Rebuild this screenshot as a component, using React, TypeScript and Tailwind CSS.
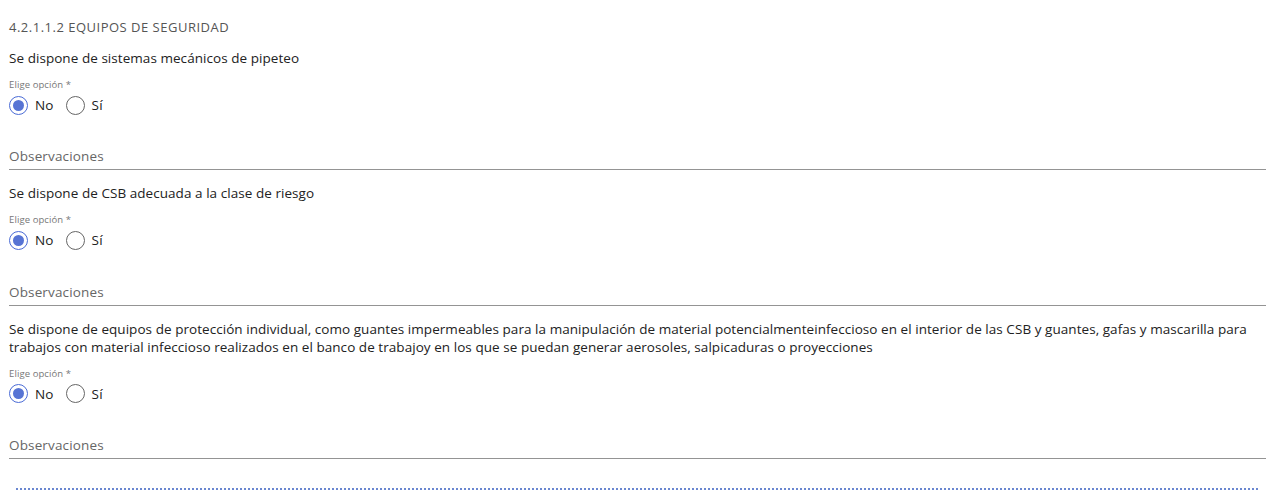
const FONT = "font-['Open_Sans',sans-serif]";

type Question = { id: string; text: string; value: "no" | "si" };

const QUESTIONS: Question[] = [
  { id: "q1", text: "Se dispone de sistemas mecánicos de pipeteo", value: "no" },
  { id: "q2", text: "Se dispone de CSB adecuada a la clase de riesgo", value: "no" },
  {
    id: "q3",
    text: "Se dispone de equipos de protección individual, como guantes impermeables para la manipulación de material potencialmenteinfeccioso en el interior de las CSB y guantes, gafas y mascarilla para trabajos con material infeccioso realizados en el banco de trabajoy en los que se puedan generar aerosoles, salpicaduras o proyecciones",
    value: "no",
  },
];

function Radio({ checked, label }: { checked: boolean; label: string }) {
  return (
    <label className="flex items-center gap-[7px]">
      <span
        className={`w-[19px] h-[19px] rounded-full border flex items-center justify-center ${
          checked ? "border-[#4a6bd6]" : "border-[#666]"
        }`}
      >
        {checked && <span className="w-[11px] h-[11px] rounded-full bg-[#5774d4]" />}
      </span>
      <span className="text-[13.5px] tracking-[0.15px] text-[#222]">{label}</span>
    </label>
  );
}

function QuestionBlock({ q }: { q: Question }) {
  return (
    <div className="flex flex-col">
      <p className="text-[13.5px] tracking-[0.05px] leading-[18px] text-[#222]">{q.text}</p>
      <p className="mt-[12px] text-[9.5px] tracking-[0.1px] leading-[12px] text-[#777]">Elige opción *</p>
      <div className="mt-[4px] flex items-center gap-[12px]">
        <Radio checked={q.value === "no"} label="No" />
        <Radio checked={q.value === "si"} label="Sí" />
      </div>
      <div className="mt-[32px] border-b border-[#949494] pb-[4px]">
        <p className="text-[13.5px] tracking-[0.15px] leading-[18px] text-[#666]">Observaciones</p>
      </div>
    </div>
  );
}

export default function App() {
  return (
    <div className={`w-[1266px] h-[498px] bg-white pl-[9px] pt-[18px] overflow-hidden ${FONT}`}>
      <h2 className="text-[13px] tracking-[0.5px] leading-[18px] font-medium text-[#555]">
        4.2.1.1.2 EQUIPOS DE SEGURIDAD
      </h2>
      <div className="mt-[13px] flex flex-col gap-[14px]">
        {QUESTIONS.map((q) => (
          <QuestionBlock key={q.id} q={q} />
        ))}
      </div>
      <div className="mt-[29px] ml-[7px] mr-[8px] border-b-2 border-dotted border-[#6a87d0]" />
    </div>
  );
}
